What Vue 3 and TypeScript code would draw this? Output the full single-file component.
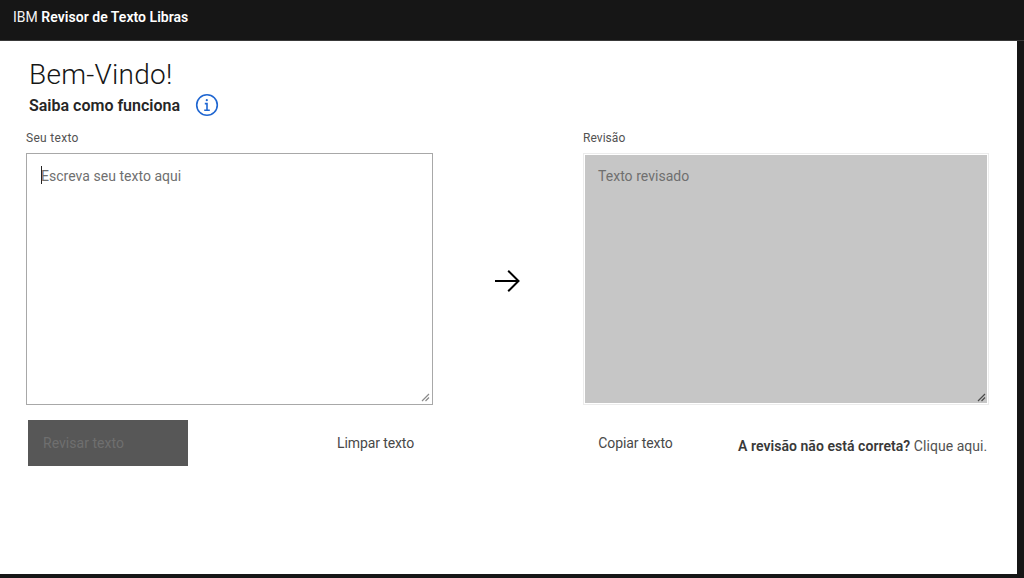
<script setup lang="ts">
const title = 'Bem-Vindo!'
</script>

<template>
  <div class="shell">
    <header class="top"><span class="brand">IBM <b>Revisor de Texto Libras</b></span></header>
    <main class="page">
      <h1>{{ title }}</h1>
      <div class="how">
        <h2>Saiba como funciona</h2>
        <svg class="info" width="24" height="24" viewBox="0 0 24 24" fill="none" stroke="#1f66d1" stroke-width="1.6">
          <circle cx="12" cy="12" r="10.3" />
          <path d="M9.2 17.2h5.6M12 17.2v-6.6H9.8" />
          <circle cx="11.8" cy="7.2" r="1.1" fill="#1f66d1" stroke="none" />
        </svg>
      </div>
      <div class="columns">
        <section class="col">
          <label class="lbl">Seu texto</label>
          <div class="field">
            <textarea class="input" placeholder="Escreva seu texto aqui"></textarea>
            <span class="caret"></span>
            <svg class="grip" width="9" height="9" viewBox="0 0 9 9" stroke="#8a8a8a" stroke-width="1.2" fill="none">
              <path d="M1 8 8 1M4.5 8 8 4.5" />
            </svg>
          </div>
          <div class="actions left">
            <button class="primary" disabled>Revisar texto</button>
            <button class="ghost">Limpar texto</button>
          </div>
        </section>
        <div class="mid">
          <svg width="26" height="24" viewBox="0 0 26 24" fill="none" stroke="#000" stroke-width="2">
            <path d="M1 12h23.5M14.2 1.8 24.5 12 14.2 22.2" />
          </svg>
        </div>
        <section class="col right">
          <label class="lbl">Revisão</label>
          <div class="field out">
            <textarea class="input output" placeholder="Texto revisado" disabled></textarea>
            <svg class="grip" width="9" height="9" viewBox="0 0 9 9" stroke="#4a4a4a" stroke-width="1.2" fill="none">
              <path d="M1 8 8 1M4.5 8 8 4.5" />
            </svg>
          </div>
          <div class="actions">
            <button class="ghost copy">Copiar texto</button>
            <p class="note"><b>A revisão não está correta?</b> Clique aqui.</p>
          </div>
        </section>
      </div>
    </main>
  </div>
</template>

<style>
html, body { margin: 0; background: #161616; }
</style>

<style scoped>
* { box-sizing: border-box; }
.shell {
  width: 1024px; height: 578px; background: #161616; overflow: hidden;
  font-family: "Roboto", "Noto Sans", sans-serif; color: #161616;
}
.top {
  height: 41px; border-bottom: 1px solid #393939; padding: 0 0 7px 13px;
  display: flex; align-items: center; color: #f4f4f4; font-size: 14px; letter-spacing: 0.03px;
}
.top b { font-weight: 600; color: #fff; }
.page { width: 1017px; height: 533px; background: #fff; padding: 17px 28px 0 26px; }
h1 { margin: 0 0 0 3px; font-size: 28px; line-height: 34px; font-weight: 300; letter-spacing: 0.25px; color: #161616; }
.how { display: flex; align-items: center; margin: 0 0 0 3px; height: 26px; }
h2 { margin: 0; font-size: 16px; font-weight: 600; letter-spacing: 0; color: #262626; }
.info { margin-left: 15px; }
.columns { display: flex; margin-top: 12px; }
.col { width: 407px; flex: none; }
.right { width: 406px; }
.mid { width: 150px; height: 251px; margin-top: 24px; flex: none; display: flex; align-items: center; justify-content: center; padding: 2px 3px 0 0; }
.lbl { display: block; font-size: 12px; line-height: 16px; letter-spacing: 0.3px; color: #525252; margin-bottom: 7px; }
.right .lbl { letter-spacing: 0.05px; }
.field { position: relative; height: 252px; }
.input {
  display: block; width: 100%; height: 100%; margin: 0; padding: 13px 14px; background: #fff;
  border: 1px solid #a8a8a8; border-radius: 0; outline: none; resize: none;
  font: 400 14px/18px "Roboto", sans-serif; letter-spacing: 0.03px; color: #161616;
}
.input::placeholder { color: #6f6f6f; opacity: 1; }
.caret { position: absolute; left: 15px; top: 13px; width: 1px; height: 18px; background: #262626; }
.grip { position: absolute; right: 3px; bottom: 3px; }
.out { height: 252px; border: 1px solid #ececec; padding: 1px 1px 1px 1px; width: 406px; }
.out .grip { right: 2px; bottom: 2px; }
.output { background: #c6c6c6; border: 0; padding: 12px 13px; height: 248px; }
.output::placeholder { color: #6f6f6f; }
.actions { display: flex; align-items: flex-start; margin-top: 15px; }
.left { padding-left: 2px; }
.primary {
  width: 160px; height: 46px; border: 0; background: #575757; color: #6f6f6f; text-align: left; padding: 0 15px;
  font: 400 14px "Roboto", sans-serif; letter-spacing: 0.03px;
}
.ghost {
  border: 0; background: none; padding: 0; height: 46px; font: 400 14px "Roboto", sans-serif; letter-spacing: -0.1px; color: #484848; white-space: nowrap;
}
.left .ghost { margin-left: 149px; }
.right .actions { margin-top: 15px; }
.copy { margin-left: 15px; height: 46px; width: 75px; }
.note { margin: 0 0 0 65px; font-size: 14px; line-height: 18px; padding-top: 17px; letter-spacing: 0.05px; color: #525252; white-space: nowrap; }
.note b { font-weight: 600; color: #393939; }
</style>
